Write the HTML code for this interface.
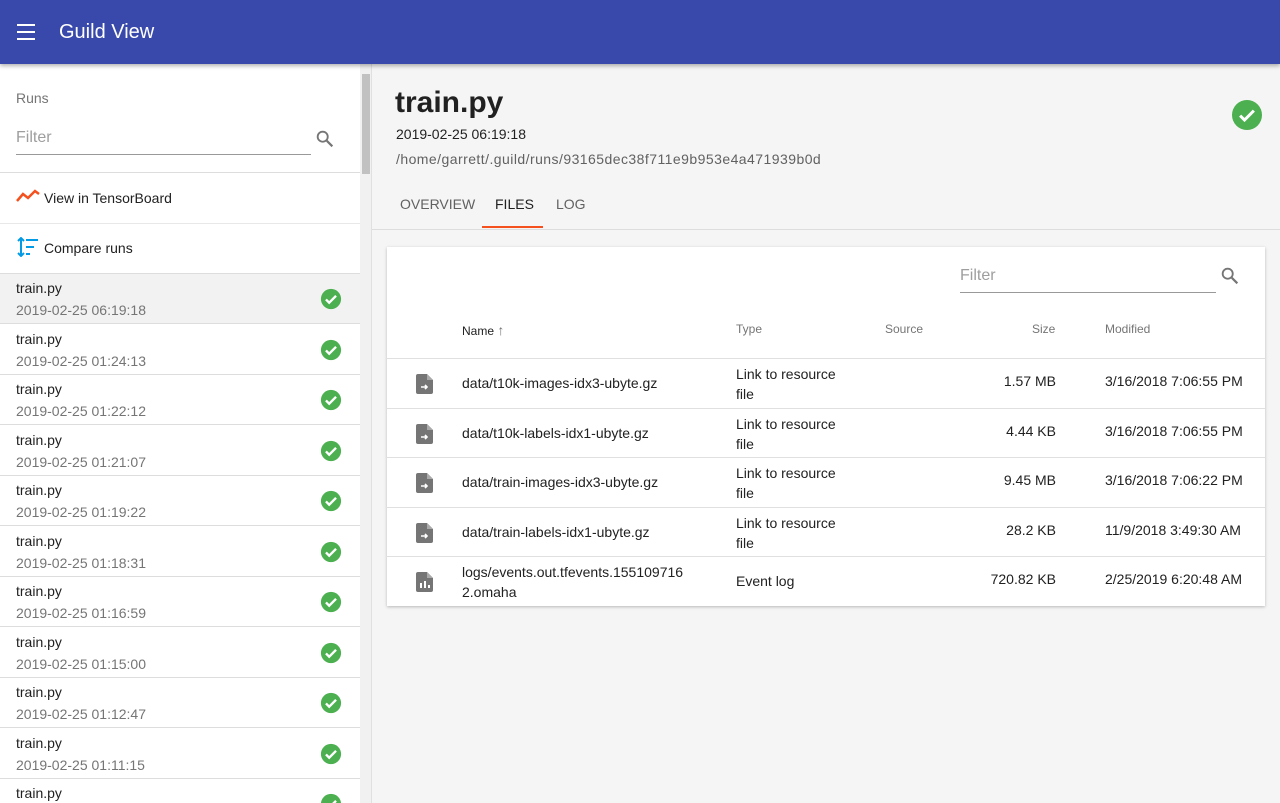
<!DOCTYPE html>
<html><head><style>
*{box-sizing:border-box;margin:0;padding:0}
body{width:1280px;height:803px;overflow:hidden;font-family:"Liberation Sans",sans-serif;background:#f5f5f5;position:relative;color:#212121}
.hdr{position:absolute;left:0;top:0;width:1280px;height:64px;background:#3949ab;box-shadow:0 2px 4px rgba(0,0,0,.3);z-index:5}
.hdr .t{position:absolute;left:59px;top:21px;color:#fff;font-size:20px}
.side{position:absolute;left:0;top:64px;width:360px;height:739px;background:#fff;overflow:hidden}
.sb{position:absolute;left:360px;top:64px;width:12px;height:739px;background:#f1f1f1;border-right:1px solid #e0e0e0}
.sb div{position:absolute;left:2px;top:10px;width:8px;height:100px;background:#c1c1c1}
.abs{position:absolute}
.row{position:absolute;left:0;width:360px;height:50px;border-bottom:1px solid #ddd}
.row .a{position:absolute;left:16px;top:6px;font-size:14px;color:#212121}
.row .b{position:absolute;left:16px;top:28px;font-size:14px;color:#757575}
.row svg{position:absolute;left:320px;top:14px}
.card{position:absolute;left:387px;top:247px;width:878px;height:359px;background:#fff;box-shadow:0 1px 3px rgba(0,0,0,.25)}
.fr{position:absolute;left:0;width:878px;height:50px;border-top:1px solid #e0e0e0;font-size:14px}
.fr span{position:absolute}
</style></head><body>
<div class="hdr">
<svg class="abs" style="left:16px;top:22px" width="20" height="20" viewBox="0 0 20 20"><path d="M1 3h18M1 10h18M1 17h18" stroke="#fff" stroke-width="2"/></svg>
<div class="t">Guild View</div></div>
<div class="side">
<div class="abs" style="left:16px;top:26px;font-size:14px;color:#757575">Runs</div>
<div class="abs" style="left:16px;top:65px;font-size:16px;color:#9e9e9e">Filter</div>
<div class="abs" style="left:16px;top:90px;width:295px;height:1px;background:#999"></div>
<svg class="abs" style="left:314px;top:64px" width="22" height="22" viewBox="0 0 24 24"><circle cx="9.5" cy="9.5" r="5.5" fill="none" stroke="#757575" stroke-width="2"/><path d="M14 14l6 6" stroke="#757575" stroke-width="2.4"/></svg>
<div class="abs" style="left:0;top:108px;width:360px;height:1px;background:#ddd"></div>
<svg class="abs" style="left:16px;top:125px" width="24" height="14" viewBox="0 0 24 14"><path d="M1 12l6-7 5 4 7-7 4 3" fill="none" stroke="#f4511e" stroke-width="2.5"/></svg>
<div class="abs" style="left:44px;top:126px;font-size:14px">View in TensorBoard</div>
<div class="abs" style="left:0;top:159px;width:360px;height:1px;background:#e8e8e8"></div>
<svg class="abs" style="left:17px;top:173px" width="22" height="20" viewBox="0 0 22 20"><path d="M4 1v18M1 4l3-3 3 3M1 16l3 3 3-3M9 3h12M9 10h8M9 17h4" fill="none" stroke="#039be5" stroke-width="2"/></svg>
<div class="abs" style="left:44px;top:176px;font-size:14px">Compare runs</div>
<div class="abs" style="left:0;top:209px;width:360px;height:1px;background:#ddd"></div>
<div id="rows"></div>
</div>
<div class="sb"><div></div></div>
<div class="abs" style="left:395px;top:86px;font-size:30px;font-weight:bold">train.py</div>
<div class="abs" style="left:396px;top:126px;font-size:14px">2019-02-25 06:19:18</div>
<div class="abs" style="left:396px;top:151px;font-size:14px;color:#616161;letter-spacing:0.45px">/home/garrett/.guild/runs/93165dec38f711e9b953e4a471939b0d</div>
<svg class="abs" style="left:1232px;top:100px" width="30" height="30" viewBox="0 0 24 24"><circle cx="12" cy="12" r="12" fill="#4caf50"/><path d="M6.5 12.5l3.5 3.5 7.5-7.5" fill="none" stroke="#fff" stroke-width="2.4"/></svg>
<div class="abs" style="left:400px;top:196px;font-size:14px;color:#616161">OVERVIEW</div>
<div class="abs" style="left:495px;top:196px;font-size:14px;color:#212121">FILES</div>
<div class="abs" style="left:556px;top:196px;font-size:14px;color:#616161">LOG</div>
<div class="abs" style="left:482px;top:226px;width:61px;height:2px;background:#f4511e"></div>
<div class="abs" style="left:372px;top:229px;width:908px;height:1px;background:#ddd"></div>
<div class="card">
<div class="abs" style="left:573px;top:20px;font-size:16px;color:#9e9e9e">Filter</div>
<div class="abs" style="left:573px;top:45px;width:256px;height:1px;background:#999"></div>
<svg class="abs" style="left:832px;top:18px" width="22" height="22" viewBox="0 0 24 24"><circle cx="9.5" cy="9.5" r="5.5" fill="none" stroke="#757575" stroke-width="2"/><path d="M14 14l6 6" stroke="#757575" stroke-width="2.4"/></svg>
<div class="abs" style="left:75px;top:75px;font-size:12px;color:#212121">Name <span style="color:#757575;font-size:14px">↑</span></div>
<div class="abs" style="left:349px;top:75px;font-size:12px;color:#757575">Type</div>
<div class="abs" style="left:498px;top:75px;font-size:12px;color:#757575">Source</div>
<div class="abs" style="left:645px;top:75px;font-size:12px;color:#757575">Size</div>
<div class="abs" style="left:718px;top:75px;font-size:12px;color:#757575">Modified</div>
<div id="files"></div>
</div>
<script>
var d=["06:19:18","01:24:13","01:22:12","01:21:07","01:19:22","01:18:31","01:16:59","01:15:00","01:12:47","01:11:15","01:10:00"],h="";
d.forEach(function(t,i){h+='<div class="row" style="top:'+(210+i*50.5)+'px;'+(i==0?'background:#f2f2f2':'')+'"><div class="a">train.py</div><div class="b">2019-02-25 '+t+'</div><svg width="22" height="22" viewBox="0 0 24 24"><circle cx="12" cy="12" r="11" fill="#4caf50"/><path d="M6.5 12.5l3.5 3.5 7.5-7.5" fill="none" stroke="#fff" stroke-width="2.6"/></svg></div>'});
document.getElementById("rows").innerHTML=h;
var f=[["data/t10k-images-idx3-ubyte.gz","1.57 MB","3/16/2018 7:06:55 PM"],["data/t10k-labels-idx1-ubyte.gz","4.44 KB","3/16/2018 7:06:55 PM"],["data/train-images-idx3-ubyte.gz","9.45 MB","3/16/2018 7:06:22 PM"],["data/train-labels-idx1-ubyte.gz","28.2 KB","11/9/2018 3:49:30 AM"],["logs/events.out.tfevents.155109716<br>2.omaha","720.82 KB","2/25/2019 6:20:48 AM"]];
h="";f.forEach(function(r,i){var ev=i==4;
var icon='<svg style="left:29px;top:15px;position:absolute" width="18" height="20" viewBox="0 0 18 20"><path d="M2 0h9l6 6v12a2 2 0 0 1-2 2H2a2 2 0 0 1-2-2V2a2 2 0 0 1 2-2z" fill="#757575"/><path d="M11 0v6h6" fill="#aaa"/>'+(ev?'<path d="M5 11v5M9 9v7M13 13v3" stroke="#fff" stroke-width="2"/>':'<path d="M5 13h6M9 11l2 2-2 2" stroke="#fff" stroke-width="1.6" fill="none"/>')+'</svg>';
h+='<div class="fr" style="top:'+(111+i*49.5)+'px">'+icon+'<span style="left:75px;top:'+(ev?5:14)+'px;line-height:20px">'+r[0]+'</span><span style="left:349px;top:'+(ev?14:5)+'px;line-height:20px">'+(ev?'Event log':'Link to resource<br>file')+'</span><span style="right:209px;top:14px">'+r[1]+'</span><span style="left:718px;top:14px">'+r[2]+'</span></div>'});
document.getElementById("files").innerHTML=h;
</script>
</body></html>
